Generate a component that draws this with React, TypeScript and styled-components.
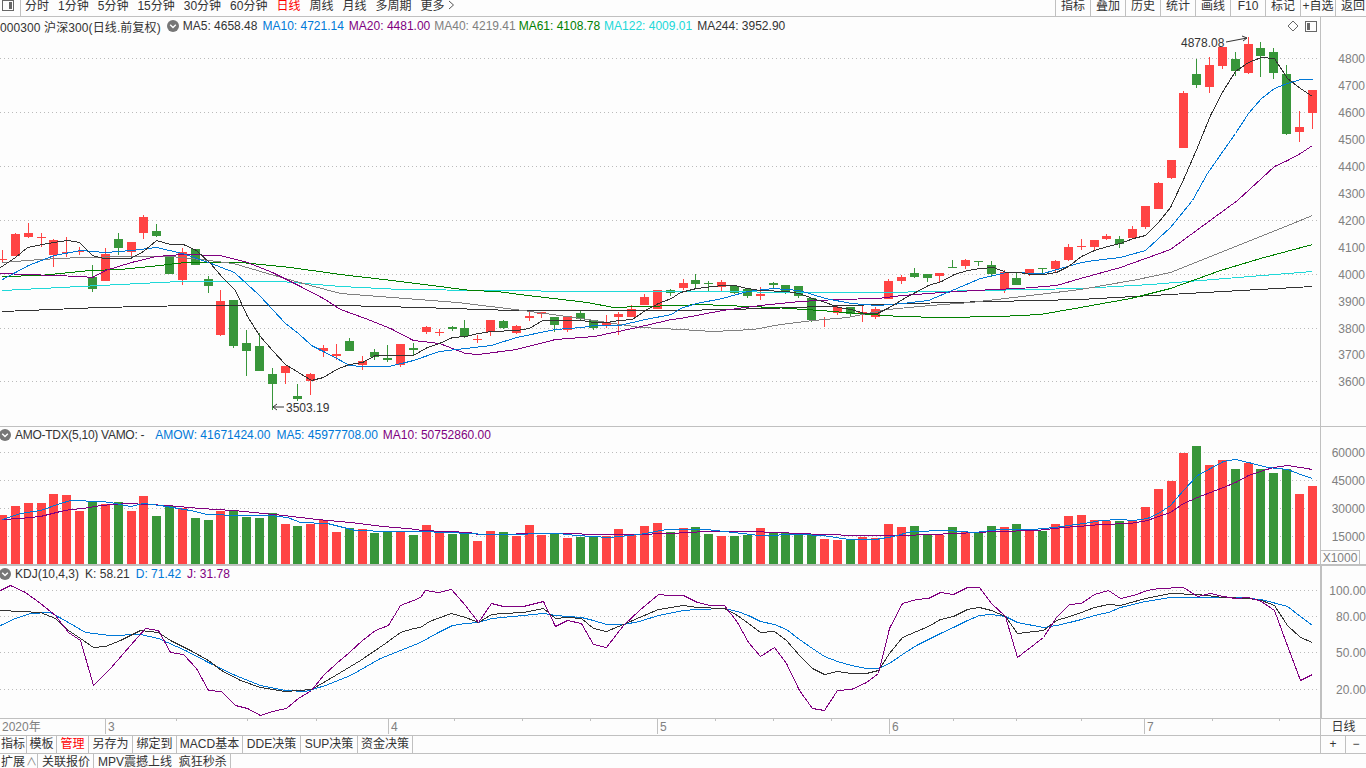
import React from 'react';
import styled, { createGlobalStyle } from 'styled-components';

const RED = '#ff4444';
const GREEN = '#38963a';
const LINE = '#c0c0c0';
const TEXT = '#333333';
const GREY = '#808080';
const BLUE = '#0078d7';
const PURPLE = '#800080';
const DARKGREEN = '#008000';
const CYAN = '#20d8d8';

const GlobalStyle = createGlobalStyle`
  html, body { margin: 0; padding: 0; background: #fdfdfd; overflow: hidden; }
  body {
    font-family: "Liberation Sans", "Noto Sans CJK SC", sans-serif;
    font-size: 12px;
    color: ${TEXT};
  }
`;

// candle x positions, all y values below are screen pixels
const candleX = (i: number) => Math.floor(2.6 + i * 12.84);

// [bodyTop, bodyBottom, high, low, up]
const candles: [number, number, number, number, number][] = [
  [259, 260, 250, 262, 1], [234, 256, 233, 256, 1], [233, 237, 223, 238, 1], [237, 238, 233, 247, 1],
  [240, 255, 239, 267, 1], [252, 253, 237, 257, 1], [251, 252, 247, 255, 1], [277, 289, 265, 292, 0],
  [254, 281, 248, 281, 1], [239, 248, 233, 255, 0], [242, 252, 242, 257, 1], [217, 233, 215, 239, 1],
  [231, 236, 224, 237, 0], [255, 274, 255, 274, 0], [252, 280, 248, 285, 1], [249, 265, 249, 265, 0],
  [279, 286, 276, 293, 0], [301, 335, 290, 336, 1], [300, 346, 300, 348, 0], [343, 351, 330, 376, 0],
  [346, 371, 333, 371, 0], [374, 384, 368, 410, 0], [366, 373, 366, 384, 1], [396, 399, 384, 401, 0],
  [374, 381, 373, 395, 1], [348, 351, 345, 357, 1], [354, 356, 344, 360, 1], [341, 351, 338, 351, 0],
  [361, 365, 356, 370, 1], [352, 357, 349, 360, 0], [358, 360, 345, 362, 0], [344, 365, 344, 367, 1],
  [348, 350, 343, 355, 0], [327, 332, 326, 334, 1], [332, 333, 329, 336, 1], [327, 329, 326, 331, 0],
  [328, 336, 320, 338, 0], [339, 340, 335, 343, 1], [320, 332, 320, 336, 1], [321, 328, 320, 329, 0],
  [326, 333, 325, 334, 1], [316, 318, 310, 321, 1], [312, 314, 312, 318, 1], [317, 325, 317, 332, 0],
  [316, 330, 316, 332, 1], [313, 319, 311, 320, 0], [320, 328, 320, 330, 0], [322, 325, 315, 328, 1],
  [314, 317, 312, 335, 1], [309, 317, 305, 317, 1], [297, 305, 294, 305, 1], [290, 309, 290, 309, 1],
  [290, 293, 289, 296, 0], [283, 288, 279, 290, 1], [280, 284, 274, 288, 0], [283, 284, 281, 291, 0],
  [282, 287, 280, 291, 1], [286, 293, 286, 294, 0], [289, 296, 289, 298, 0], [294, 296, 287, 300, 1],
  [283, 285, 282, 288, 0], [285, 291, 285, 294, 0], [286, 296, 286, 298, 0], [298, 320, 298, 322, 0],
  [319, 320, 317, 327, 1], [307, 313, 306, 315, 1], [307, 314, 307, 316, 0], [312, 314, 304, 322, 1],
  [309, 317, 307, 319, 1], [281, 299, 279, 299, 1], [277, 281, 275, 284, 1], [273, 277, 268, 278, 0],
  [274, 278, 274, 282, 0], [273, 276, 273, 282, 1], [267, 268, 260, 268, 0], [260, 266, 259, 269, 1],
  [261, 262, 261, 266, 0], [265, 274, 261, 277, 0], [272, 290, 270, 293, 1], [278, 285, 272, 285, 0],
  [269, 274, 269, 276, 1], [268, 269, 268, 274, 0], [261, 269, 260, 273, 1], [247, 260, 244, 261, 1],
  [246, 247, 239, 250, 1], [240, 247, 240, 251, 1], [236, 239, 234, 240, 1], [239, 244, 236, 248, 0],
  [229, 238, 226, 238, 1], [206, 227, 206, 229, 1], [183, 209, 182, 209, 1], [160, 178, 160, 179, 1],
  [93, 148, 91, 148, 1], [74, 85, 59, 88, 0], [65, 87, 57, 93, 1], [47, 66, 47, 69, 1],
  [59, 71, 52, 76, 0], [44, 73, 37, 74, 1], [48, 56, 42, 77, 0], [52, 73, 48, 79, 0],
  [74, 134, 65, 135, 0], [127, 132, 111, 142, 1], [90, 113, 90, 129, 1],
];

// volume bar tops, baseline is y = 564
const volumes = [
  515, 506, 503, 503, 494, 495, 511, 502, 504, 502, 511, 496, 516, 506, 508, 518, 520, 511, 511, 517,
  518, 513, 524, 526, 524, 520, 532, 528, 529, 533, 531, 531, 535, 525, 533, 534, 532, 541, 531, 532,
  536, 525, 535, 533, 538, 537, 536, 536, 529, 535, 526, 523, 532, 528, 527, 534, 536, 536, 535, 528,
  533, 533, 535, 534, 539, 540, 540, 537, 538, 524, 527, 526, 535, 535, 527, 532, 532, 526, 527, 524,
  529, 531, 524, 516, 515, 520, 521, 521, 521, 507, 489, 481, 453, 446, 465, 460, 469, 463, 469, 473,
  469, 494, 486,
];

type Pt = number[];

const ma5: Pt[] = [
  [0, 267], [15, 257], [27, 247], [47, 243], [67, 240], [79, 242], [92, 255], [103, 258], [130, 258], [143, 251],
  [156, 240], [170, 244], [183, 244], [196, 250], [210, 263], [222, 277], [235, 290], [247, 316], [259, 335],
  [272, 350], [285, 364], [298, 372], [311, 380], [323, 377], [336, 369], [349, 364], [362, 362], [375, 355],
  [413, 355], [427, 347], [439, 343], [452, 337], [465, 336], [478, 333], [491, 331], [516, 330], [529, 328],
  [542, 320], [581, 320], [594, 322], [606, 322], [619, 320], [632, 319], [645, 310], [658, 303], [671, 298],
  [680, 292], [696, 288], [722, 285], [734, 285], [747, 288], [760, 290], [786, 291], [799, 293], [812, 298],
  [825, 302], [838, 307], [851, 309], [864, 313], [877, 313], [889, 307], [902, 299], [915, 292], [928, 285],
  [941, 281], [954, 274], [967, 270], [980, 268], [993, 267], [1006, 272], [1019, 272], [1030, 274], [1043, 274],
  [1056, 272], [1068, 266], [1081, 256], [1094, 250], [1107, 246], [1120, 243], [1133, 238], [1145, 235],
  [1158, 222], [1170, 207], [1184, 177], [1197, 147], [1210, 115], [1223, 90], [1235, 71], [1248, 62], [1261, 57],
  [1274, 58], [1287, 78], [1300, 88], [1312, 96],
];

const ma10: Pt[] = [
  [2, 279], [15, 272], [28, 265], [54, 255], [80, 250], [105, 252], [131, 250], [156, 247], [182, 253], [208, 262],
  [234, 272], [259, 295], [285, 323], [298, 333], [311, 345], [323, 351], [340, 360], [349, 365], [362, 366],
  [388, 366], [401, 363], [413, 360], [439, 351], [465, 348], [491, 345], [516, 337], [555, 329], [581, 327],
  [594, 325], [619, 325], [645, 319], [671, 314], [680, 308], [696, 303], [722, 298], [747, 291], [773, 288],
  [799, 290], [825, 298], [851, 303], [877, 305], [902, 303], [928, 300], [954, 289], [980, 278], [1006, 272],
  [1043, 273], [1060, 268], [1081, 262], [1094, 260], [1120, 257], [1145, 250], [1158, 238], [1170, 227],
  [1192, 200], [1207, 173], [1223, 150], [1235, 133], [1248, 113], [1261, 98], [1274, 88], [1287, 83], [1300, 79],
  [1312, 79],
];

const ma20: Pt[] = [
  [0, 273], [80, 276], [92, 277], [105, 270], [131, 262], [156, 256], [182, 254], [220, 255], [247, 262], [272, 272],
  [298, 285], [323, 298], [340, 309], [365, 318], [390, 328], [413, 340], [439, 343], [465, 353], [478, 354],
  [516, 349], [555, 339], [594, 336], [632, 328], [671, 319], [680, 318], [722, 310], [760, 305], [799, 301],
  [838, 299], [877, 298], [902, 295], [941, 292], [993, 289], [1019, 288], [1056, 285], [1080, 278], [1120, 267],
  [1145, 258], [1170, 249], [1237, 200], [1274, 166], [1287, 160], [1300, 153], [1312, 145],
];

const ma40: Pt[] = [
  [2, 262], [40, 259], [80, 257], [130, 256], [170, 256], [200, 259], [233, 263], [267, 273], [310, 285], [340, 293],
  [457, 302], [523, 310], [573, 317], [607, 322], [640, 327], [680, 329], [713, 331], [753, 329], [780, 324],
  [813, 320], [847, 317], [887, 309], [930, 305], [970, 302], [1013, 297], [1080, 289], [1137, 279], [1170, 272],
  [1200, 260], [1250, 240], [1290, 224], [1312, 215],
];

const ma61: Pt[] = [
  [2, 276], [40, 275], [90, 270], [120, 269], [150, 266], [185, 262], [240, 262], [290, 267], [340, 274], [400, 281],
  [447, 287], [470, 290], [497, 291], [527, 295], [553, 298], [587, 302], [613, 307], [640, 306], [680, 305],
  [700, 304], [773, 307], [820, 310], [870, 314], [900, 316], [940, 317], [1000, 316], [1040, 314], [1080, 307],
  [1130, 298], [1170, 288], [1220, 270], [1260, 258], [1312, 244],
];

const ma122: Pt[] = [
  [2, 290], [60, 287], [100, 285], [180, 281], [280, 281], [340, 286], [400, 289], [490, 290], [590, 291], [680, 291],
  [830, 292], [883, 292], [1080, 288], [1150, 284], [1200, 280], [1312, 271],
];

const ma244: Pt[] = [
  [2, 311], [100, 307], [190, 305], [340, 305], [420, 307], [513, 310], [680, 310], [767, 308], [847, 305], [947, 302],
  [1080, 299], [1312, 286],
];

const fromWide = (pts: Pt[]) => pts.map(([x, y]) => [420 + (x * 700) / 1568, 500 + y / 3]);
const fromRight = (pts: Pt[]) => pts.map(([x, y]) => [1100 + x / 3, 420 + y / 3]);
const fromLeft = (pts: Pt[]) => pts.map(([x, y]) => [x / 3, 425 + y / 3]);

const amoShort: Pt[] = [
  ...fromLeft([[6, 283], [60, 265], [120, 255], [180, 235], [210, 226], [300, 229], [330, 230], [390, 243], [430, 235],
    [480, 240], [570, 255], [620, 267], [720, 270], [810, 270], [860, 275], [900, 290], [980, 295], [1065, 315], [1170, 318]]),
  ...fromWide([[0, 94], [60, 96], [110, 98], [145, 103], [225, 101], [260, 98], [310, 99], [350, 104], [420, 110], [490, 103],
    [550, 88], [590, 88], [640, 86], [700, 97], [760, 104], [850, 103], [900, 106], [960, 117], [1020, 116], [1060, 107],
    [1100, 92], [1180, 89], [1240, 96], [1300, 87], [1370, 88], [1420, 81], [1500, 65]]),
  ...fromRight([[0, 300], [60, 298], [100, 301], [140, 295], [175, 278], [210, 255], [250, 210], [290, 165], [330, 143],
    [370, 122], [406, 118], [445, 125], [500, 140], [560, 148], [600, 162], [635, 175]]),
];

const amoLong: Pt[] = [
  ...fromLeft([[6, 283], [60, 280], [120, 272], [180, 257], [210, 252], [250, 248], [300, 240], [380, 235], [500, 240],
    [600, 248], [700, 256], [850, 270], [950, 281], [1050, 290], [1150, 303], [1250, 312]]),
  ...fromWide([[0, 90], [60, 92], [110, 97], [130, 101], [300, 100], [420, 103], [480, 102], [560, 98], [640, 92], [740, 94],
    [800, 96], [900, 102], [980, 106], [1080, 105], [1200, 100], [1290, 92], [1380, 90], [1440, 81], [1500, 74]]),
  ...fromRight([[0, 311], [90, 308], [140, 300], [175, 288], [210, 275], [250, 250], [290, 232], [330, 217], [370, 200],
    [406, 185], [445, 165], [490, 150], [520, 142], [560, 135], [600, 140], [635, 148]]),
];

const kdjJ: Pt[] = [
  [0, 590], [10, 585], [25, 592], [40, 603], [55, 615], [68, 632], [80, 640], [93, 685], [110, 668], [130, 645], [145, 628],
  [158, 630], [170, 652], [183, 654], [196, 668], [208, 690], [221, 691], [235, 705], [247, 708], [260, 715], [272, 711],
  [286, 708], [298, 698], [311, 690], [323, 675], [336, 663], [349, 652], [362, 640], [375, 630], [388, 625], [400, 605],
  [413, 600],
  ...fromWide([[0, 290], [12, 270], [40, 277], [70, 267], [100, 315], [130, 365], [158, 310], [185, 319], [230, 318], [275, 304],
    [303, 377], [330, 361], [360, 370], [388, 432], [416, 440], [455, 375], [490, 330], [532, 281], [555, 286], [590, 284],
    [620, 305], [650, 316], [680, 316], [710, 365], [735, 425], [762, 469], [792, 442], [820, 490], [850, 570], [878, 625],
    [905, 629], [935, 571], [965, 568], [1000, 545], [1025, 520], [1050, 385], [1079, 310], [1110, 296], [1138, 295],
    [1165, 277], [1195, 281], [1225, 262], [1252, 262], [1280, 310], [1310, 348], [1338, 472], [1395, 410], [1425, 350],
    [1453, 312], [1480, 308], [1510, 282], [1540, 271]]),
  [1120, 598], [1133, 595], [1147, 590], [1158, 588], [1183, 587], [1197, 596], [1210, 593], [1223, 596], [1235, 598],
  [1248, 597], [1261, 601], [1274, 610], [1285, 640], [1300, 680], [1312, 674],
];

const kdjK: Pt[] = [
  [0, 610], [40, 612], [55, 618], [68, 630], [80, 638], [93, 647], [105, 646], [120, 640], [140, 630], [158, 632], [170, 640],
  [190, 650], [208, 660], [221, 670], [240, 680], [260, 687], [285, 691], [311, 689], [330, 678], [360, 660], [385, 643],
  [400, 632], [413, 628],
  ...fromWide([[0, 380], [20, 362], [45, 352], [70, 340], [100, 350], [130, 365], [158, 342], [185, 340], [230, 335], [275, 324],
    [303, 355], [330, 352], [360, 355], [388, 383], [416, 394], [455, 373], [490, 352], [532, 326], [590, 316], [620, 320],
    [680, 325], [710, 345], [735, 370], [762, 397], [792, 394], [820, 420], [850, 465], [878, 505], [905, 523], [935, 514],
    [965, 520], [1000, 520], [1025, 510], [1050, 460], [1079, 412], [1110, 392], [1138, 378], [1165, 358], [1195, 348],
    [1225, 328], [1252, 322], [1280, 331], [1310, 348], [1338, 400], [1395, 390], [1425, 360], [1453, 347], [1480, 337],
    [1510, 320], [1540, 313]]),
  [1120, 605], [1145, 598], [1170, 593], [1197, 594], [1223, 597], [1248, 598], [1261, 600], [1274, 605], [1287, 625],
  [1300, 637], [1312, 642],
];

const kdjD: Pt[] = [
  [0, 625], [15, 618], [30, 613], [50, 612], [68, 622], [85, 632], [110, 635], [140, 634], [158, 638], [185, 650], [208, 662],
  [235, 675], [260, 685], [285, 690], [305, 691], [325, 685], [350, 675], [380, 658], [400, 650],
  ...fromWide([[0, 427], [40, 395], [72, 375], [100, 368], [130, 366], [158, 355], [230, 345], [275, 338], [303, 345], [360, 350],
    [388, 360], [416, 373], [455, 373], [490, 363], [532, 345], [590, 331], [620, 327], [680, 325], [710, 332], [735, 345],
    [762, 362], [792, 372], [820, 387], [850, 418], [878, 445], [905, 468], [935, 483], [965, 495], [1000, 505], [1025, 505],
    [1050, 490], [1079, 462], [1110, 435], [1138, 417], [1165, 400], [1195, 382], [1225, 360], [1252, 346], [1280, 343],
    [1310, 348], [1338, 365], [1395, 380], [1425, 375], [1453, 365], [1480, 357], [1510, 345], [1540, 337]]),
  [1120, 607], [1145, 601], [1170, 597], [1197, 597], [1235, 597], [1261, 599], [1287, 606], [1300, 616], [1312, 625],
];

// half pixel offset so horizontal stretches land on a pixel row
const toPoints = (pts: Pt[]) => pts.map(([x, y]) => `${Math.round(x) + 0.5},${Math.round(y) + 0.5}`).join(' ');

const periods = ['分时', '1分钟', '5分钟', '15分钟', '30分钟', '60分钟', '日线', '周线', '月线', '多周期'];
const actions = ['指标', '叠加', '历史', '统计', '画线', 'F10', '标记', '+自选', '返回'];
const tabs = [
  { label: '指标', w: 27 }, { label: '模板', w: 30 }, { label: '管理', w: 32, active: true }, { label: '另存为', w: 44 },
  { label: '绑定到', w: 44 }, { label: 'MACD基本', w: 66 }, { label: 'DDE决策', w: 58 }, { label: 'SUP决策', w: 57 },
  { label: '资金决策', w: 55 },
];
const timeTicks: { x: number; label?: string }[] = [
  { x: 105, label: '3' }, { x: 176 }, { x: 247 }, { x: 316 }, { x: 388, label: '4' }, { x: 454 }, { x: 522 }, { x: 590 },
  { x: 657, label: '5' }, { x: 715 }, { x: 773 }, { x: 831 }, { x: 889, label: '6' }, { x: 953 }, { x: 1016 }, { x: 1081 },
  { x: 1144, label: '7' }, { x: 1212 }, { x: 1279 },
];

const Page = styled.div`
  width: 1366px;
  height: 768px;
  overflow: hidden;
  display: flex;
  flex-direction: column;
  background: #fdfdfd;
`;

const Toolbar = styled.div`
  flex: 0 0 17px;
  display: flex;
  box-sizing: border-box;
  border-bottom: 1px solid ${LINE};
  line-height: 13px;
`;

const PeriodGroup = styled.div`
  flex: 0 0 1055px;
  display: flex;
  align-items: flex-start;
  gap: 9px;
`;

const ToggleCell = styled.div`
  width: 21px;
  height: 16px;
  box-sizing: border-box;
  border-right: 1px solid ${LINE};
  margin-right: -5px;
  padding: 0 0 0 2px;
`;

const Period = styled.span<{ $active?: boolean }>`
  color: ${p => (p.$active ? '#ff0000' : TEXT)};
  white-space: nowrap;
`;

const ActionGroup = styled.div`
  display: flex;
`;

const Action = styled.div`
  flex: 0 0 35px;
  box-sizing: border-box;
  border-left: 1px solid ${LINE};
  text-align: center;
  white-space: nowrap;
`;

const Panel = styled.div<{ $height: number; $border?: number }>`
  flex: 0 0 ${p => p.$height}px;
  display: flex;
  box-sizing: border-box;
  border-bottom: ${p => p.$border ?? 1}px solid ${LINE};
`;

const PanelBody = styled.div`
  flex: 0 0 1320px;
  display: flex;
  flex-direction: column;
`;

const Legend = styled.div<{ $height: number }>`
  flex: 0 0 ${p => p.$height}px;
  display: flex;
  align-items: center;
  white-space: nowrap;
  gap: 6px;
`;

const LegendText = styled.span<{ $color?: string; $left?: number; $tracking?: number }>`
  color: ${p => p.$color ?? TEXT};
  margin-left: ${p => p.$left ?? 0}px;
  letter-spacing: ${p => p.$tracking ?? 0}px;
`;

const LegendDot = styled.span`
  display: flex;
  margin-left: -1px;
  margin-right: -1px;
`;

const LegendIcons = styled.div`
  margin-left: auto;
  display: flex;
  align-items: center;
  gap: 6px;
  padding-right: 3px;
`;

const Plot = styled.svg`
  display: block;
  flex: 1 1 auto;
  min-height: 0;
  width: 1320px;
`;

const AxisColumn = styled.div<{ $thick?: boolean }>`
  position: relative;
  flex: 1 1 auto;
  box-sizing: border-box;
  border-left: ${p => (p.$thick ? 2 : 1)}px solid ${LINE};
`;

const AxisSvg = styled.svg`
  display: block;
  width: 100%;
  height: 100%;
  font-size: 12px;
  fill: ${GREY};
`;

const ScaleBadge = styled.div`
  position: absolute;
  left: 0;
  bottom: 0;
  width: 39px;
  height: 14px;
  box-sizing: border-box;
  border-top: 1px solid ${LINE};
  border-right: 1px solid ${LINE};
  color: ${GREY};
  text-align: center;
  line-height: 14px;
  background: #fdfdfd;
`;

const TimeRow = styled.div`
  flex: 0 0 16px;
  display: flex;
  box-sizing: border-box;
  border-bottom: 1px solid ${LINE};
  line-height: 16px;
`;

const TimeAxis = styled.div`
  position: relative;
  flex: 0 0 1320px;
  color: ${GREY};
  padding-left: 2px;
  box-sizing: border-box;
`;

const TimeTick = styled.div<{ $major?: boolean }>`
  position: absolute;
  top: 0;
  height: ${p => (p.$major ? 15 : 2)}px;
  border-left: 1px solid ${LINE};
  padding-left: 2px;
`;

const PeriodLabel = styled.div`
  flex: 1 1 auto;
  box-sizing: border-box;
  border-left: 1px solid ${LINE};
  text-align: center;
`;

const TabRow = styled.div`
  flex: 0 0 17px;
  display: flex;
  box-sizing: border-box;
  border-bottom: 1px solid ${LINE};
  line-height: 17px;
`;

const TabStrip = styled.div`
  flex: 0 0 1320px;
  display: flex;
`;

const Tab = styled.div<{ $w: number; $active?: boolean }>`
  flex: 0 0 ${p => p.$w}px;
  box-sizing: border-box;
  border-right: 1px solid ${LINE};
  text-align: center;
  white-space: nowrap;
  color: ${p => (p.$active ? '#ff0000' : TEXT)};
`;

const ZoomButton = styled.div<{ $w: number }>`
  flex: 0 0 ${p => p.$w}px;
  box-sizing: border-box;
  border-left: 1px solid ${LINE};
  text-align: center;
`;

const ExtRow = styled.div`
  flex: 1 1 auto;
  display: flex;
  line-height: 17px;
  overflow: hidden;
`;

const ExtCell = styled.div<{ $w: number; $pad: number }>`
  flex: 0 0 ${p => p.$w}px;
  box-sizing: border-box;
  border-right: 1px solid ${LINE};
  padding-left: ${p => p.$pad}px;
  white-space: nowrap;
`;

const Caret = styled.span`
  color: ${GREY};
  font-size: 11px;
  margin-left: 1px;
`;

const DropDot = () => (
  <svg width="12" height="12" viewBox="0 0 12 12">
    <circle cx="6" cy="6" r="6" fill="#777777" />
    <path d="M3.2 4.8 L6 7.6 L8.8 4.8" fill="none" stroke="#ffffff" strokeWidth="1.4" />
  </svg>
);

const SplitBox = ({ dark }: { dark: 'left' | 'right' }) => (
  <svg width="12" height="11" viewBox="0 0 12 11" shapeRendering="crispEdges" style={{ display: 'block' }}>
    <rect x="0.5" y="0.5" width="11" height="10" rx="1" fill="#fdfdfd" stroke="#666666" />
    <rect x={dark === 'left' ? 2 : 7} y="2" width="3" height="7" fill="#666666" />
  </svg>
);

const Diamond = () => (
  <svg width="12" height="12" viewBox="0 0 12 12">
    <path d="M6 1 L11 6 L6 11 L1 6 Z" fill="none" stroke="#666666" />
  </svg>
);

const Grid = ({ lines }: { lines: number[] }) => (
  <>
    {lines.map(y => (
      <line key={y} x1="0" x2="1320" y1={y} y2={y} stroke="#bbbbbb" strokeDasharray="1 3" shapeRendering="crispEdges" />
    ))}
  </>
);

const Curve = ({ pts, color }: { pts: Pt[]; color: string }) => (
  <polyline points={toPoints(pts)} fill="none" stroke={color} strokeWidth="1" shapeRendering="crispEdges" />
);

const AxisLabels = ({ items }: { items: { y: number; text: string }[] }) => (
  <>
    {items.map(l => (
      <text key={l.text} x="44" y={l.y + 4.5} textAnchor="end">
        {l.text}
      </text>
    ))}
  </>
);

const priceGrid = [0, 1, 2, 3, 4, 5, 6].map(i => 58.5 + i * 53.9);
const priceLabels = Array.from({ length: 13 }, (_, i) => ({ y: 58.5 + i * 26.95, text: String(4800 - i * 100) }));
const volGrid = [452, 480, 508, 536];
const volLabels = [
  { y: 452, text: '60000' }, { y: 480, text: '45000' }, { y: 508, text: '30000' }, { y: 536, text: '15000' },
];
const kdjGrid = [590, 616, 652, 689];
const kdjLabels = [
  { y: 590, text: '100.00' }, { y: 616, text: '80.00' }, { y: 652, text: '50.00' }, { y: 689, text: '20.00' },
];

export default function App() {
  return (
    <Page>
      <GlobalStyle />
      <Toolbar>
        <PeriodGroup>
          <ToggleCell>
            <SplitBox dark="right" />
          </ToggleCell>
          {periods.map(p => (
            <Period key={p} $active={p === '日线'}>
              {p}
            </Period>
          ))}
          <Period>
            更多
            <svg width="7" height="10" viewBox="0 0 7 10" style={{ marginLeft: 3 }}>
              <path d="M1 1 L5.5 5 L1 9" fill="none" stroke="#555555" />
            </svg>
          </Period>
        </PeriodGroup>
        <ActionGroup>
          {actions.map(a => (
            <Action key={a}>{a}</Action>
          ))}
        </ActionGroup>
      </Toolbar>

      <Panel $height={410}>
        <PanelBody>
          <Legend $height={18}>
            <LegendText $tracking={0.1}>000300 沪深300(日线.前复权)</LegendText>
            <DropDot />
            <LegendText $left={-2}>MA5: 4658.48</LegendText>
            <LegendText $color={BLUE} $left={-1}>MA10: 4721.14</LegendText>
            <LegendText $color={PURPLE} $left={-1}>MA20: 4481.00</LegendText>
            <LegendText $color={GREY} $left={-2}>MA40: 4219.41</LegendText>
            <LegendText $color={DARKGREEN} $left={-3}>MA61: 4108.78</LegendText>
            <LegendText $color={CYAN} $left={-2}>MA122: 4009.01</LegendText>
            <LegendText $left={-1}>MA244: 3952.90</LegendText>
            <LegendIcons>
              <Diamond />
              <SplitBox dark="left" />
            </LegendIcons>
          </Legend>
          <Plot viewBox="0 35 1320 391" preserveAspectRatio="none">
            <Grid lines={priceGrid} />
            {candles.map(([top, bottom, high, low, up], i) => {
              const x = candleX(i);
              const color = up ? RED : GREEN;
              return (
                <g key={i} fill={color} shapeRendering="crispEdges">
                  <rect x={x} y={high} width="1" height={low - high} />
                  <rect x={x - 4} y={top} width="9" height={bottom - top} />
                </g>
              );
            })}
            <Curve pts={ma244} color={TEXT} />
            <Curve pts={ma122} color={CYAN} />
            <Curve pts={ma61} color={DARKGREEN} />
            <Curve pts={ma40} color={GREY} />
            <Curve pts={ma20} color={PURPLE} />
            <Curve pts={ma10} color={BLUE} />
            <Curve pts={ma5} color={TEXT} />
            <g fontSize="12" fill={TEXT}>
              <text x="1181" y="47">4878.08</text>
              <text x="286" y="412">3503.19</text>
            </g>
            <g fill="none" stroke={TEXT}>
              <path d="M1226 42 L1247 38 M1242 36 L1247 38 L1243 41" />
              <path d="M284 407 L273 407 M277 404 L273 407 L277 410" />
            </g>
          </Plot>
        </PanelBody>
        <AxisColumn>
          <AxisSvg viewBox="0 17 45 409" preserveAspectRatio="none">
            <AxisLabels items={priceLabels} />
          </AxisSvg>
        </AxisColumn>
      </Panel>

      <Panel $height={139} $border={2}>
        <PanelBody>
          <Legend $height={16}>
            <LegendDot>
              <DropDot />
            </LegendDot>
            <LegendText $left={-1} $tracking={-0.28}>AMO-TDX(5,10) VAMO: -</LegendText>
            <LegendText $color={BLUE} $left={5}>AMOW: 41671424.00</LegendText>
            <LegendText $color={BLUE}>MA5: 45977708.00</LegendText>
            <LegendText $color={PURPLE} $left={-1}>MA10: 50752860.00</LegendText>
          </Legend>
          <Plot viewBox="0 443 1320 121" preserveAspectRatio="none">
            <Grid lines={volGrid} />
            {volumes.map((top, i) => (
              <rect
                key={i}
                x={candleX(i) - 4}
                y={top}
                width="9"
                height={564 - top}
                fill={candles[i][4] ? RED : GREEN}
                shapeRendering="crispEdges"
              />
            ))}
            <Curve pts={amoLong} color={PURPLE} />
            <Curve pts={amoShort} color={BLUE} />
          </Plot>
        </PanelBody>
        <AxisColumn>
          <AxisSvg viewBox="0 427 45 137" preserveAspectRatio="none">
            <AxisLabels items={volLabels} />
          </AxisSvg>
          <ScaleBadge>X1000</ScaleBadge>
        </AxisColumn>
      </Panel>

      <Panel $height={153}>
        <PanelBody>
          <Legend $height={16}>
            <LegendDot>
              <DropDot />
            </LegendDot>
            <LegendText $left={-1}>KDJ(10,4,3)</LegendText>
            <LegendText>K: 58.21</LegendText>
            <LegendText $color={BLUE}>D: 71.42</LegendText>
            <LegendText $color={PURPLE}>J: 31.78</LegendText>
          </Legend>
          <Plot viewBox="0 582 1320 136" preserveAspectRatio="none">
            <Grid lines={kdjGrid} />
            <Curve pts={kdjD} color={BLUE} />
            <Curve pts={kdjK} color={TEXT} />
            <Curve pts={kdjJ} color={PURPLE} />
          </Plot>
        </PanelBody>
        <AxisColumn $thick>
          <AxisSvg viewBox="0 566 44 152" preserveAspectRatio="none">
            <AxisLabels items={kdjLabels} />
          </AxisSvg>
        </AxisColumn>
      </Panel>

      <TimeRow>
        <TimeAxis>
          2020年
          {timeTicks.map(t => (
            <TimeTick key={t.x} $major={!!t.label} style={{ left: t.x }}>
              {t.label}
            </TimeTick>
          ))}
        </TimeAxis>
        <PeriodLabel>日线</PeriodLabel>
      </TimeRow>

      <TabRow>
        <TabStrip>
          {tabs.map(t => (
            <Tab key={t.label} $w={t.w} $active={t.active}>
              {t.label}
            </Tab>
          ))}
        </TabStrip>
        <ZoomButton $w={25}>+</ZoomButton>
        <ZoomButton $w={21}>−</ZoomButton>
      </TabRow>

      <ExtRow>
        <ExtCell $w={38} $pad={1}>
          扩展<Caret>∧</Caret>
        </ExtCell>
        <ExtCell $w={56} $pad={4}>关联报价</ExtCell>
        <ExtCell $w={137} $pad={4}>MPV震撼上线&nbsp;&nbsp;疯狂秒杀</ExtCell>
      </ExtRow>
    </Page>
  );
}
